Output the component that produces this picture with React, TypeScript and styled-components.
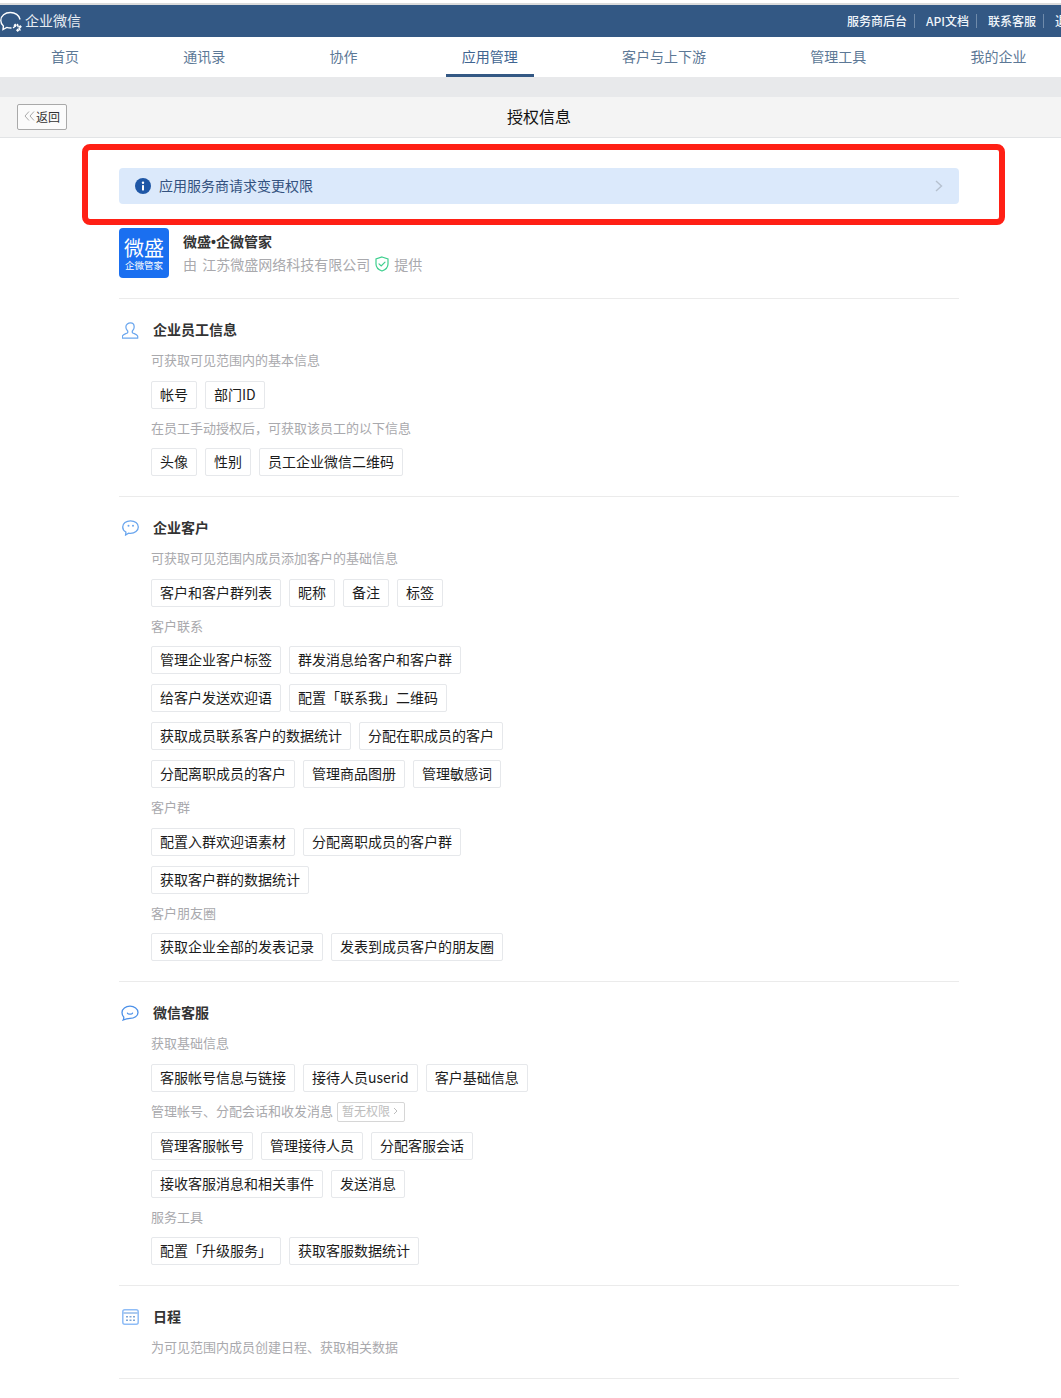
import React from 'react'
import styled, { createGlobalStyle } from 'styled-components'

const GlobalStyle = createGlobalStyle`
	html, body {
		margin: 0;
		padding: 0;
		background: #fff;
		overflow-x: hidden;
		font-family: "Noto Sans CJK SC", "Liberation Sans", sans-serif;
	}
`

const Page = styled.div`
	position: relative;
	width: 1061px;
	height: 1398px;
	padding-top: 3px;
	box-sizing: border-box;
	overflow: hidden;
	background: #fff;
`

const TopBar = styled.div`
	display: flex;
	align-items: center;
	height: 32px;
	border-top: 2px solid #dcdcdc;
	background: #335884;
	color: #fff;
	overflow: hidden;
`

const Brand = styled.div`
	display: flex;
	align-items: center;
	gap: 2px;
	font-size: 14px;
	line-height: 18px;
	color: #e8edf3;
`

const BrandText = styled.span`
	position: relative;
	top: -1px;
`

const TopLinks = styled.div`
	display: flex;
	align-items: center;
	flex-shrink: 0;
	margin-left: auto;
	margin-right: -25px;
	font-size: 12px;
	font-weight: 500;
	color: #f0f5fa;
`

const TopLink = styled.span`
	display: flex;
	align-items: center;
	height: 12px;
	padding: 0 7px 2px 11px;
	border-right: 1px solid #6f8bab;

	&:last-child {
		border-right: none;
	}
`

const Nav = styled.nav`
	display: flex;
	gap: 104.25px;
	height: 40px;
	padding-left: 51px;
	background: #fff;
	box-shadow: 0 1px 1px #d8d8d8;
`

const NavItem = styled.a<{ $active?: boolean }>`
	position: relative;
	flex-shrink: 0;
	font-size: 14px;
	line-height: 38px;
	color: #5c7896;

	${({ $active }) => $active && `
		color: #3f6591;

		&::after {
			content: '';
			position: absolute;
			left: -16px;
			right: -16px;
			bottom: 0;
			height: 3px;
			background: #335884;
		}
	`}
`

const GrayStrip = styled.div`
	height: 20px;
	background: #e8e9eb;
`

const PageHeader = styled.div`
	display: flex;
	align-items: center;
	height: 40px;
	padding: 0 50px 0 17px;
	background: #f4f4f4;
	border-bottom: 1px solid #e2e4e6;
`

const BackButton = styled.button`
	display: flex;
	align-items: center;
	justify-content: center;
	gap: 1px;
	box-sizing: border-box;
	width: 50px;
	height: 26px;
	padding: 0 0 2px;
	background: #fbfbfb;
	border: 1px solid #a9a9a9;
	border-radius: 2px;
	font-family: inherit;
	font-size: 12px;
	color: #333;
`

const PageTitle = styled.h1`
	flex: 1;
	margin: 0 0 2px;
	text-align: center;
	font-size: 16px;
	font-weight: 400;
	color: #111;
`

const Content = styled.main`
	padding: 30px 102px 0 119px;
`

const Banner = styled.div`
	display: flex;
	align-items: center;
	height: 36px;
	padding: 0 16px;
	background: #dbe9fb;
	border-radius: 4px;
	font-size: 14px;
	color: #33527f;
`

const BannerText = styled.span`
	flex: 1;
	margin: 0 0 2px 8px;
`

const AppRow = styled.div`
	display: flex;
	gap: 14px;
	margin-top: 24px;
	padding-bottom: 20px;
	border-bottom: 1px solid #ebebeb;
`

const AppLogo = styled.div`
	display: flex;
	flex-direction: column;
	align-items: center;
	justify-content: center;
	width: 50px;
	height: 50px;
	padding-top: 2px;
	box-sizing: border-box;
	background: #1a6ff0;
	border-radius: 4px;
	color: #fff;
`

const LogoMain = styled.span`
	font-size: 20px;
	line-height: 22px;
`

const LogoSub = styled.span`
	font-size: 9.5px;
	line-height: 12px;
`

const AppInfo = styled.div`
	display: flex;
	flex-direction: column;
`

const AppName = styled.div`
	margin-top: 3px;
	font-size: 14px;
	line-height: 20px;
	font-weight: 700;
	color: #333;
`

const NameDot = styled.span`
	font-family: "Liberation Sans", sans-serif;
`

const AppVendor = styled.div`
	display: flex;
	align-items: center;
	gap: 5px;
	margin-top: 2px;
	font-size: 14px;
	line-height: 20px;
	word-spacing: 2px;
	color: #a9a9ad;
`

const Section = styled.section`
	padding: 21px 0 20px;
	border-bottom: 1px solid #ebebeb;
`

const SectionHead = styled.div`
	display: flex;
	align-items: center;
	height: 20px;
`

const IconBox = styled.span`
	display: flex;
	justify-content: center;
	width: 22px;
	margin-right: 12px;
`

const SectionTitle = styled.h2`
	margin: 0 0 2px;
	font-size: 14px;
	font-weight: 700;
	color: #333;
`

const SectionBody = styled.div`
	padding-left: 32px;
`

const Label = styled.div<{ $first?: boolean; $tall?: boolean; $tail?: boolean }>`
	display: flex;
	align-items: center;
	gap: 4px;
	height: ${({ $tall }) => ($tall ? 21 : 20)}px;
	margin-top: ${({ $first }) => ($first ? 10 : 9)}px;
	margin-bottom: ${({ $tail }) => ($tail ? 1 : 0)}px;
	font-size: 13px;
	color: #a9a9ad;
`

const LabelText = styled.span`
	margin-bottom: 2px;
`

const TagRows = styled.div<{ $first?: boolean }>`
	display: flex;
	flex-direction: column;
	gap: 10px;
	margin-top: ${({ $first }) => ($first ? 11 : 10)}px;
`

const TagRow = styled.div`
	display: flex;
	gap: 8px;
`

const Tag = styled.span`
	box-sizing: border-box;
	height: 28px;
	padding: 0 8px;
	background: #fff;
	border: 1px solid #e6e8eb;
	border-radius: 2px;
	font-size: 14px;
	line-height: 24px;
	color: #1c1c1c;
	white-space: nowrap;
`

const NoAccess = styled.span`
	display: inline-flex;
	align-items: center;
	gap: 3px;
	box-sizing: border-box;
	height: 20px;
	padding: 0 6px 2px 4px;
	border: 1px solid #d6d6d6;
	border-radius: 2px;
	font-size: 12px;
	color: #bdbdbd;
`

const Highlight = styled.div`
	position: absolute;
	left: 82px;
	top: 144px;
	width: 923px;
	height: 81px;
	box-sizing: border-box;
	border: 6px solid #ff2015;
	border-radius: 8px;
`

const BrandIcon = () => (
	<svg width="23" height="24" viewBox="0 0 23 24" fill="none">
		<path d="M11 19c-1.6 0-3-.2-4.200-.6L3 20.500l.4-3.500C1.600 15.400.8 13.500.8 11.400.8 6.800 5 3.500 10.400 3.500c4.800 0 8.800 2.700 9.500 6.500" stroke="#fff" strokeWidth="1.400" strokeLinecap="round" />
		<path d="M13.500 18.500l2-1.500M17.500 15.500l.6 2M20 21l-1-1.800" stroke="#fff" strokeWidth="1.500" strokeLinecap="round" />
		<rect x="14" y="15" width="2.400" height="2.400" transform="rotate(45 15.200 16.200)" fill="#fff" />
		<rect x="19" y="16.500" width="2.400" height="2.400" transform="rotate(45 20.200 17.700)" fill="#fff" />
		<rect x="16.500" y="20" width="2.400" height="2.400" transform="rotate(45 17.700 21.200)" fill="#fff" />
	</svg>
)

const DoubleLeft = () => (
	<svg width="11" height="10" viewBox="0 0 11 10" fill="none" stroke="#aaa" strokeWidth="1">
		<path d="M5 .5 1 5l4 4.500M10 .5 6 5l4 4.500" />
	</svg>
)

const InfoIcon = () => (
	<svg width="16" height="16" viewBox="0 0 16 16">
		<circle cx="8" cy="8" r="8" fill="#1f57a6" />
		<rect x="7" y="7" width="2" height="5.500" rx=".4" fill="#fff" />
		<circle cx="8" cy="4.700" r="1.200" fill="#fff" />
	</svg>
)

const Chevron = () => (
	<svg width="8" height="12" viewBox="0 0 8 12" fill="none" stroke="#b6c1cf" strokeWidth="1.400">
		<path d="M1 1l5.500 5L1 11" />
	</svg>
)

const SmallChevron = () => (
	<svg width="5" height="8" viewBox="0 0 5 8" fill="none" stroke="#bdbdbd" strokeWidth="1">
		<path d="M1 1l3 3-3 3" />
	</svg>
)

const ShieldIcon = () => (
	<svg width="14" height="16" viewBox="0 0 14 16" fill="none" stroke="#3ecf8e" strokeWidth="1.200">
		<path d="M7 1l6 2v5c0 3.500-2.600 5.800-6 7-3.400-1.200-6-3.500-6-7V3z" />
		<path d="M4 7.800l2.200 2.200L10 6.200" strokeLinecap="round" />
	</svg>
)

const UserIcon = () => (
	<svg width="17" height="17" viewBox="0 0 18 18" fill="none" stroke="#6aa6ee" strokeWidth="1.300">
		<path d="M9 1c2.400 0 3.900 1.800 3.900 4.200 0 1.700-.7 3.100-1.700 4.100-.5.500-.5 1.800.2 2.300 1.200.8 4.100 1.400 5 3 .4.800.2 2.400.2 2.400H.4s-.2-1.600.2-2.400c.9-1.600 3.800-2.200 5-3 .7-.5.7-1.800.2-2.300-1-1-1.700-2.400-1.700-4.100C4.100 2.800 6.600 1 9 1z" />
	</svg>
)

const ChatIcon = () => (
	<svg width="17" height="16" viewBox="0 0 17 16">
		<path d="M8.500 .8C4.200 .8.700 3.500.700 7c0 2.200 1.300 4 3.200 5l-.3 3 3-1.800c.6.100 1.200.2 1.900.2 4.300 0 7.800-2.800 7.800-6.400S12.800.8 8.500.8z" fill="none" stroke="#6aa6ee" strokeWidth="1.300" />
		<circle cx="6.500" cy="5.800" r="1" fill="#6aa6ee" />
		<circle cx="11" cy="5.800" r="1" fill="#6aa6ee" />
	</svg>
)

const ServiceIcon = () => (
	<svg width="18" height="16" viewBox="0 0 18 16" fill="none" stroke="#4b90e8" strokeWidth="1.300">
		<path d="M9 1.200c4.300 0 8 2.700 8 6.200s-3.700 6-8 6c-1.800 0-4 .3-6.800 1.600.6-1.300.7-2.300.5-3C1.800 11 1 9.300 1 7.400 1 3.900 4.700 1.200 9 1.200z" />
		<path d="M6.500 8.200c.6 1.200 4.400 1.200 5 0" strokeLinecap="round" />
	</svg>
)

const CalendarIcon = () => (
	<svg width="17" height="16" viewBox="0 0 17 16">
		<rect x=".8" y=".8" width="15.400" height="14.400" rx="2" fill="#fff" stroke="#8fbdf7" strokeWidth="1.500" />
		<rect x="1.500" y="3.500" width="14" height="1" fill="#5f97dd" />
		<path d="M4 7h2v1.500H4zM7.500 7h2v1.500h-2zM11 7h2v1.500h-2zM4 10.500h2V12H4zM7.500 10.500h2V12h-2zM11 10.500h2V12h-2z" fill="#7fa6d6" />
	</svg>
)

const navItems = ['首页', '通讯录', '协作', '应用管理', '客户与上下游', '管理工具', '我的企业']
const topLinks = ['服务商后台', 'API文档', '联系客服', '退出']

interface Group {
	label: string
	noAccess?: boolean
	tall?: boolean
	rows?: string[][]
}

interface SectionData {
	title: string
	icon: React.ReactNode
	groups: Group[]
}

const sections: SectionData[] = [
	{
		title: '企业员工信息',
		icon: <UserIcon />,
		groups: [
			{ label: '可获取可见范围内的基本信息', rows: [['帐号', '部门ID']] },
			{ label: '在员工手动授权后，可获取该员工的以下信息', rows: [['头像', '性别', '员工企业微信二维码']] },
		],
	},
	{
		title: '企业客户',
		icon: <ChatIcon />,
		groups: [
			{ label: '可获取可见范围内成员添加客户的基础信息', rows: [['客户和客户群列表', '昵称', '备注', '标签']] },
			{
				label: '客户联系',
				rows: [
					['管理企业客户标签', '群发消息给客户和客户群'],
					['给客户发送欢迎语', '配置「联系我」二维码'],
					['获取成员联系客户的数据统计', '分配在职成员的客户'],
					['分配离职成员的客户', '管理商品图册', '管理敏感词'],
				],
			},
			{
				label: '客户群',
				tall: true,
				rows: [
					['配置入群欢迎语素材', '分配离职成员的客户群'],
					['获取客户群的数据统计'],
				],
			},
			{ label: '客户朋友圈', rows: [['获取企业全部的发表记录', '发表到成员客户的朋友圈']] },
		],
	},
	{
		title: '微信客服',
		icon: <ServiceIcon />,
		groups: [
			{ label: '获取基础信息', rows: [['客服帐号信息与链接', '接待人员userid', '客户基础信息']] },
			{
				label: '管理帐号、分配会话和收发消息',
				noAccess: true,
				tall: true,
				rows: [
					['管理客服帐号', '管理接待人员', '分配客服会话'],
					['接收客服消息和相关事件', '发送消息'],
				],
			},
			{ label: '服务工具', rows: [['配置「升级服务」', '获取客服数据统计']] },
		],
	},
	{
		title: '日程',
		icon: <CalendarIcon />,
		groups: [{ label: '为可见范围内成员创建日程、获取相关数据' }],
	},
]

export default function App() {
	return (
		<Page>
			<GlobalStyle />
			<TopBar>
				<Brand>
					<BrandIcon />
					<BrandText>企业微信</BrandText>
				</Brand>
				<TopLinks>
					{topLinks.map((link) => <TopLink key={link}>{link}</TopLink>)}
				</TopLinks>
			</TopBar>
			<Nav>
				{navItems.map((item) => <NavItem key={item} $active={item === '应用管理'}>{item}</NavItem>)}
			</Nav>
			<GrayStrip />
			<PageHeader>
				<BackButton><DoubleLeft />返回</BackButton>
				<PageTitle>授权信息</PageTitle>
			</PageHeader>
			<Content>
				<Banner>
					<InfoIcon />
					<BannerText>应用服务商请求变更权限</BannerText>
					<Chevron />
				</Banner>
				<AppRow>
					<AppLogo>
						<LogoMain>微盛</LogoMain>
						<LogoSub>企微管家</LogoSub>
					</AppLogo>
					<AppInfo>
						<AppName>微盛<NameDot>•</NameDot>企微管家</AppName>
						<AppVendor>
							由 江苏微盛网络科技有限公司
							<ShieldIcon />
							提供
						</AppVendor>
					</AppInfo>
				</AppRow>
				{sections.map((section) => (
					<Section key={section.title}>
						<SectionHead>
							<IconBox>{section.icon}</IconBox>
							<SectionTitle>{section.title}</SectionTitle>
						</SectionHead>
						<SectionBody>
							{section.groups.map((group, i) => (
								<React.Fragment key={group.label}>
									<Label $first={i === 0} $tall={group.tall} $tail={!group.rows}>
										<LabelText>{group.label}</LabelText>
										{group.noAccess && <NoAccess>暂无权限<SmallChevron /></NoAccess>}
									</Label>
									{group.rows && (
										<TagRows $first={i === 0}>
											{group.rows.map((row, r) => (
												<TagRow key={r}>
													{row.map((tag) => <Tag key={tag}>{tag}</Tag>)}
												</TagRow>
											))}
										</TagRows>
									)}
								</React.Fragment>
							))}
						</SectionBody>
					</Section>
				))}
			</Content>
			<Highlight />
		</Page>
	)
}
